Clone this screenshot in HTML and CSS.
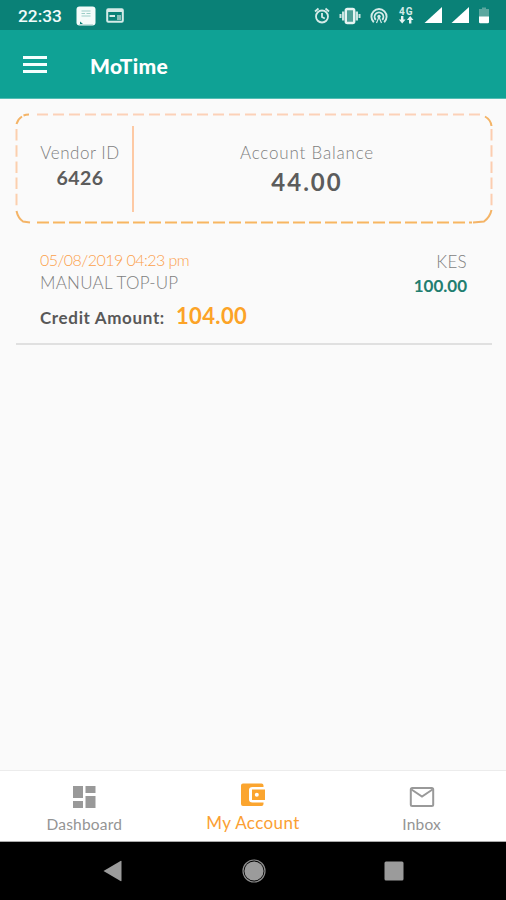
FILE: index.html
```html
<!DOCTYPE html>
<html lang="en">

<head>
  <meta charset="UTF-8">
  <meta name="viewport" content="width=device-width, initial-scale=1.0">
  <title>MoTime</title>
  <link rel="stylesheet" href="styles.css">
</head>

<body>
  <div class="screen">

    <!-- Status bar -->
    <div class="status-bar">
      <span class="clock">22:33</span>
      <svg class="status-app" width="20" height="20" viewBox="0 0 20 20">
        <rect x="0.5" y="0.5" width="19" height="19" rx="3" fill="#f4fbfa" />
        <path d="M5.500 5h9M5.500 7.500h3.500M10.500 7.500h4M5.500 10h9" stroke="#9ccdc7" stroke-width="1.200" />
        <path d="M3 18.500h14" stroke="#c3e0dc" />
        <path d="M4 15.500l3 2.500h-3z" fill="#0b8278" />
      </svg>
      <svg class="status-web" width="18" height="15" viewBox="0 0 18 15">
        <rect x="1.200" y="1.200" width="15.600" height="12.600" rx="1" fill="none" stroke="#d5ebe8" stroke-width="2" />
        <path d="M1 2.500h16" stroke="#d5ebe8" stroke-width="3" />
        <path d="M3.500 8h5.500" stroke="#d5ebe8" stroke-width="2" />
        <path d="M11 7h4v5h-4z" fill="#86c0b9" />
      </svg>
      <div class="status-icons">
        <svg width="16" height="18" viewBox="0 0 16 18" fill="none" stroke="#d5ebe8" stroke-width="1.800">
          <circle cx="8" cy="9.500" r="6" />
          <path d="M1 4.500L4.500 1.500M15 4.500L11.500 1.500M8 6v4l2.800 1.500" />
        </svg>
        <svg class="vibrate" width="22" height="18" viewBox="0 0 22 18">
          <rect x="6.800" y="2" width="8.400" height="14" rx="1.500" fill="#4fa198" stroke="#e6f4f2" stroke-width="2.400" />
          <path d="M4.200 4.500v9M17.800 4.500v9" stroke="#c9e5e2" stroke-width="2.400" />
          <path d="M1.500 7v4M20.500 7v4" stroke="#c9e5e2" stroke-width="2" />
        </svg>
        <svg class="hotspot" width="18" height="18" viewBox="0 0 18 18" fill="none" stroke="#d5ebe8" stroke-width="1.900">
          <path d="M3.800 15.200a7.600 7.600 0 1 1 10.400 0" />
          <path d="M5.800 12.800a4.400 4.400 0 1 1 6.400 0" />
          <circle cx="9" cy="9.500" r="1.700" fill="#d5ebe8" stroke="none" />
          <path d="M9 10l-2.500 6M9 10l2.500 6" stroke-width="1.200" />
        </svg>
        <div class="network">
          <span>4G</span>
          <svg width="16" height="8" viewBox="0 0 16 8" fill="#e6f4f2">
            <path d="M3 0h2.400v3.500h2.100L4.200 7.500 0.900 3.500H3zM11 7.500h2.400V4h2.100L12.200 0 8.900 4H11z" />
          </svg>
        </div>
        <svg class="signal" width="19" height="17" viewBox="0 0 19 17" fill="#fff"><path d="M0.500 16L18 0v16z" /></svg>
        <svg class="signal-two" width="19" height="17" viewBox="0 0 19 17" fill="#fff"><path d="M0.500 16L18 0v16z" /></svg>
        <svg class="battery" width="10" height="17" viewBox="0 0 10 17">
          <path d="M0 2h3V0.500h4V2h3v8H0z" fill="#5ba79f" />
          <path d="M0 9.500h10V15a1.200 1.200 0 0 1-1.200 1.200H1.200A1.200 1.200 0 0 1 0 15z" fill="#fff" />
        </svg>
      </div>
    </div>

    <!-- App bar -->
    <header class="app-bar">
      <div class="menu-btn"><span></span><span></span><span></span></div>
      <h1>MoTime</h1>
    </header>

    <main>
      <section class="account-card">
        <svg class="card-border" width="478" height="111" viewBox="0 0 478 111" fill="none" stroke-width="2">
          <path d="M22 1.500H465" stroke="#fcd1b8" stroke-dasharray="11 5" />
          <path d="M1.500 15V96" stroke="#fbcfae" stroke-dasharray="11.500 4.700" stroke-dashoffset="-1" />
          <path d="M476.500 16V94" stroke="#fccdb0" stroke-dasharray="11.500 4.700" />
          <path d="M22 109.500H457" stroke="#f7b661" stroke-dasharray="12 4" />
          <path d="M1.500 11Q3 6 7 3.500M8.500 2.500Q11 1.500 14 1.500M1.500 98Q3 105 8 108.500L15 109.500M470 3.500Q476 7 476.500 13M476.500 97Q475 104 469 108.500L458 109.500" stroke="#f4b467" />
        </svg>
        <div class="vendor">
          <p class="label vendor-label">Vendor ID</p>
          <p class="vendor-id">6426</p>
        </div>
        <div class="balance">
          <p class="label">Account Balance</p>
          <p class="balance-amount">44.00</p>
        </div>
      </section>

      <section class="record">
        <div class="record-info">
          <p class="record-date">05/08/2019 04:23 pm</p>
          <p class="record-type">MANUAL TOP-UP</p>
          <p class="record-credit"><span class="credit-label">Credit Amount:</span><span class="credit-amount">104.00</span></p>
        </div>
        <div class="record-value">
          <p class="currency">KES</p>
          <p class="amount">100.00</p>
        </div>
      </section>
    </main>

    <!-- Bottom tabs -->
    <nav class="tabs">
      <div class="tab">
        <svg width="24" height="24" viewBox="0 0 24 24" fill="#999">
          <path d="M1 1h10v12H1zM13.500 1h10v7h-10zM1 16h10v7H1zM13.500 11h10v12h-10z" />
        </svg>
        <span>Dashboard</span>
      </div>
      <div class="tab active">
        <svg width="26" height="24" viewBox="0 0 26 24">
          <path d="M3 0.500h18.500q2 0 2 2v1.500H12.500Q9 4 9 7v9.500Q9 19.500 12.500 19.500h11v1.500q0 2-2 2H3q-2 0-2-2V2.500q0-2 2-2z" fill="#fba52f" />
          <path d="M12 6.500h13v10.500H12zM16.800 9.800a2 2 0 1 0 0 4 2 2 0 1 0 0-4z" fill="#fba52f" fill-rule="evenodd" />
        </svg>
        <span>My Account</span>
      </div>
      <div class="tab">
        <svg width="26" height="24" viewBox="0 0 26 24" fill="none" stroke="#999" stroke-width="2">
          <rect x="1.800" y="3" width="22.400" height="18" rx="1.500" />
          <path d="M2.500 4.500L13 11.500 23.500 4.500" />
        </svg>
        <span>Inbox</span>
      </div>
    </nav>

    <!-- System navigation -->
    <div class="system-nav">
      <svg width="20" height="22" viewBox="0 0 20 22" fill="#9b9b9b"><path d="M0.500 11L17.500 1q1-.5 1 .5v19q0 1-1 .5z" /></svg>
      <svg width="24" height="24" viewBox="0 0 24 24">
        <circle cx="12" cy="12" r="11" fill="none" stroke="#8c8c8c" stroke-width="1.200" />
        <circle cx="12" cy="12" r="9.600" fill="#9b9b9b" />
      </svg>
      <svg width="20" height="20" viewBox="0 0 20 20"><rect x="0.500" y="0.500" width="19" height="19" rx="1.500" fill="#9b9b9b" /></svg>
    </div>

  </div>
</body>

</html>
```

FILE: styles.css
```css
* {
  box-sizing: border-box;
}

body {
  margin: 0;
  font-family: Lato, "Open Sans", sans-serif;
  background-color: #fafafa;
}

h1,
p {
  margin: 0;
}

svg {
  display: block;
  flex-shrink: 0;
}

.screen {
  display: flex;
  flex-direction: column;
  width: 506px;
  height: 900px;
  overflow: hidden;
}

/* Status bar */
.status-bar {
  display: flex;
  align-items: center;
  height: 30px;
  padding: 1px 17px 0 18px;
  background-color: #0a8177;
}

.clock {
  width: 58px;
  padding-top: 1px;
  font: 500 17.3px/20px Roboto, sans-serif;
  color: #f2fbfa;
}

.status-web {
  margin-left: 10px;
}

.status-icons {
  display: flex;
  align-items: center;
  margin-left: auto;
}

.vibrate {
  margin-left: 9px;
}

.hotspot {
  margin-left: 9px;
}

.network {
  width: 16px;
  margin-left: 10px;
  font: 700 10px/9px Roboto, sans-serif;
  letter-spacing: 1px;
  color: #d5ebe8;
}

.network span {
  display: block;
  margin-left: 1px;
}

.signal {
  margin-left: 10px;
}

.signal-two {
  margin-left: 8px;
}

.battery {
  margin-left: 9px;
}

/* App bar */
.app-bar {
  display: flex;
  align-items: center;
  height: 69px;
  padding-left: 23px;
  background-color: #0fa295;
  border-bottom: 1px solid #54bdb4;
}

.menu-btn {
  display: flex;
  flex-direction: column;
  gap: 4px;
  width: 24px;
}

.menu-btn span {
  height: 3px;
  background-color: #f4fffe;
}

.app-bar h1 {
  margin: 3px 0 0 43px;
  font-size: 21px;
  line-height: 26px;
  font-weight: 900;
  letter-spacing: 0.3px;
  color: #fff;
}

main {
  flex: 1;
  padding: 14px 14px 0 15px;
}

.account-card {
  position: relative;
  display: flex;
  height: 111px;
  padding-top: 13px;
}

.card-border {
  position: absolute;
  top: 0;
  left: 0;
}

.vendor {
  width: 119px;
  height: 86px;
  padding: 16px 0 0 13px;
  border-right: 2px solid #fdc9a4;
  text-align: center;
}

.balance {
  width: 346px;
  padding-top: 16px;
  text-align: center;
}

.label {
  font-size: 17px;
  line-height: 22px;
  font-weight: 300;
  letter-spacing: 0.8px;
  color: #7e7e7e;
}

.vendor-label {
  letter-spacing: 0.55px;
}

.vendor-id {
  margin-top: 2px;
  font-size: 19.5px;
  line-height: 24px;
  font-weight: 700;
  letter-spacing: 0.5px;
  color: #5c5c5c;
}

.balance-amount {
  margin-top: 3px;
  font-size: 24px;
  line-height: 30px;
  font-weight: 700;
  letter-spacing: 2px;
  color: #5c5c5c;
}

/* Account record */
.record {
  display: flex;
  justify-content: space-between;
  height: 121px;
  margin-left: 1px;
  padding: 25px 25px 0 24px;
  border-bottom: 2px solid #e0e0e0;
}

.record-date {
  font-size: 16px;
  line-height: 22px;
  font-weight: 300;
  letter-spacing: -0.55px;
  color: #fba04a;
}

.record-type {
  font-size: 17px;
  line-height: 23px;
  font-weight: 300;
  letter-spacing: 0.25px;
  color: #7e7e7e;
}

.record-credit {
  display: flex;
  align-items: baseline;
  margin-top: 8px;
  line-height: 28px;
}

.credit-label {
  width: 136px;
  font-size: 17px;
  font-weight: 700;
  letter-spacing: 0.65px;
  color: #585858;
}

.credit-amount {
  font-size: 22px;
  font-weight: 700;
  letter-spacing: 0.35px;
  color: #fca327;
}

.record-value {
  padding-top: 1px;
  text-align: right;
}

.currency {
  font-size: 17px;
  line-height: 24px;
  font-weight: 300;
  letter-spacing: 0.3px;
  color: #7e7e7e;
}

.amount {
  font-size: 17px;
  line-height: 24px;
  font-weight: 700;
  color: #227e70;
}

/* Bottom tabs */
.tabs {
  display: flex;
  height: 72px;
  background-color: #fff;
  border-top: 1px solid #ececec;
  border-bottom: 1px solid #aaa;
}

.tab {
  flex: 1;
  display: flex;
  flex-direction: column;
  align-items: center;
  padding-top: 14px;
  font-size: 15.5px;
  line-height: 20px;
  letter-spacing: 0.2px;
  color: #949494;
}

.tab span {
  margin-top: 5px;
}

.tab.active {
  padding-top: 12px;
  font-size: 17px;
  letter-spacing: 0.4px;
  color: #fba033;
}

.tab.active span {
  margin-top: 6px;
}

/* System navigation */
.system-nav {
  display: flex;
  align-items: center;
  justify-content: space-between;
  height: 58px;
  padding: 0 102px 0 103px;
  background-color: #000;
}
```
